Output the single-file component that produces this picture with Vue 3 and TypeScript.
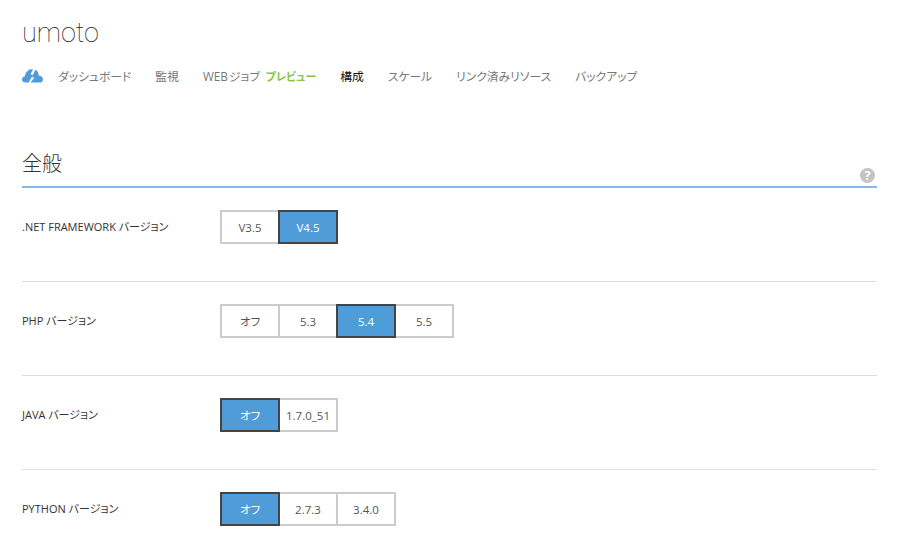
<template>
  <div class="page">
    <h1 class="site">umoto</h1>
    <nav class="nav">
      <svg class="logo" width="21" height="14" viewBox="0 0 21 14">
        <path fill="#4f9cd8" d="M6.2 1.4 C7.2 0.6 9 0.2 11 0.4 L8.4 5.6 L11 5.6 L6.8 13.6 L3.4 13.6 C1.4 13.6 0 12.3 0 10.5 C0 8.9 1.1 7.7 2.8 7.5 C3 5 4.2 2.8 6.2 1.4 Z" />
        <path fill="#4f9cd8" d="M13.2 1 C15.4 1.4 16.6 3.6 16.8 6.4 C19.4 6.6 21 8.4 21 10.4 C21 12.3 19.5 13.6 17.4 13.6 L8.6 13.6 L12.4 8.4 L9.8 8.4 Z" />
      </svg>
      <a v-for="item in navItems" :key="item.label" class="nav-item" :class="{ current: item.current }">
        {{ item.label }}<span v-if="item.badge" class="badge">{{ item.badge }}</span>
      </a>
    </nav>

    <div class="section-head">
      <h2>全般</h2>
      <span class="help">?</span>
    </div>

    <div v-for="row in rows" :key="row.label" class="row">
      <div class="label">{{ row.label }}</div>
      <div class="toggle">
        <button
          v-for="opt in row.options"
          :key="opt"
          class="opt"
          :class="{ on: opt === row.selected }"
        >{{ opt }}</button>
      </div>
    </div>
  </div>
</template>

<script setup lang="ts">
interface NavItem {
  label: string
  badge?: string
  current?: boolean
}

const navItems: NavItem[] = [
  { label: 'ダッシュボード' },
  { label: '監視' },
  { label: 'WEB ジョブ', badge: 'プレビュー' },
  { label: '構成', current: true },
  { label: 'スケール' },
  { label: 'リンク済みリソース' },
  { label: 'バックアップ' },
]

const rows = [
  { label: '.NET FRAMEWORK バージョン', options: ['V3.5', 'V4.5'], selected: 'V4.5' },
  { label: 'PHP バージョン', options: ['オフ', '5.3', '5.4', '5.5'], selected: '5.4' },
  { label: 'JAVA バージョン', options: ['オフ', '1.7.0_51'], selected: 'オフ' },
  { label: 'PYTHON バージョン', options: ['オフ', '2.7.3', '3.4.0'], selected: 'オフ' },
]
</script>

<style>
html,
body {
  margin: 0;
  background: #fff;
  overflow: hidden;
}
</style>

<style scoped>
.page {
  box-sizing: border-box;
  width: 918px;
  height: 541px;
  overflow: hidden;
  padding: 0 41px 0 22px;
  font-family: "Open Sans", "Noto Sans CJK JP", sans-serif;
  font-feature-settings: "palt";
  color: #333;
}
.site {
  margin: 0;
  padding-top: 17px;
  height: 33px;
  line-height: 33px;
  font-family: Roboto, sans-serif;
  font-size: 27px;
  font-weight: 100;
  color: #222;
}
.nav {
  display: flex;
  align-items: center;
  height: 20px;
  margin-top: 15px;
  font-size: 11.8px;
  word-spacing: -2px;
  color: #777;
}
.logo {
  margin: 2px 15px 0 0;
}
.nav-item {
  margin-right: 24px;
  white-space: nowrap;
}
.nav-item.current {
  color: #111;
}
.badge {
  margin-left: 6px;
  color: #8cc63f;
  font-weight: 700;
  font-size: 11px;
}
.section-head {
  position: relative;
  margin-top: 65px;
  height: 36px;
  border-bottom: 2px solid #88b8e4;
}
.section-head h2 {
  margin: 0;
  font-size: 20px;
  line-height: 28px;
  font-weight: 300;
  color: #333;
}
.help {
  position: absolute;
  right: 2px;
  bottom: 3px;
  width: 15px;
  height: 15px;
  border-radius: 50%;
  background: #c4c4c4;
  color: #fff;
  font-size: 12px;
  font-weight: 700;
  line-height: 15px;
  text-align: center;
}
.row {
  display: flex;
  align-items: flex-start;
  box-sizing: border-box;
  height: 94px;
  padding-top: 22px;
  border-bottom: 1px solid #ddd;
}
.label {
  width: 198px;
  line-height: 34px;
  font-size: 11px;
  color: #333;
  white-space: nowrap;
}
.toggle {
  display: flex;
}
.opt {
  box-sizing: border-box;
  width: 60px;
  height: 34px;
  margin: 0 -2px 0 0;
  padding: 0;
  border: 2px solid #ccc;
  background: #fff;
  color: #555;
  font: inherit;
  font-size: 11.5px;
}
.opt.on {
  position: relative;
  z-index: 1;
  border-color: #444;
  background: #4f9cd8;
  color: #fff;
}
</style>
